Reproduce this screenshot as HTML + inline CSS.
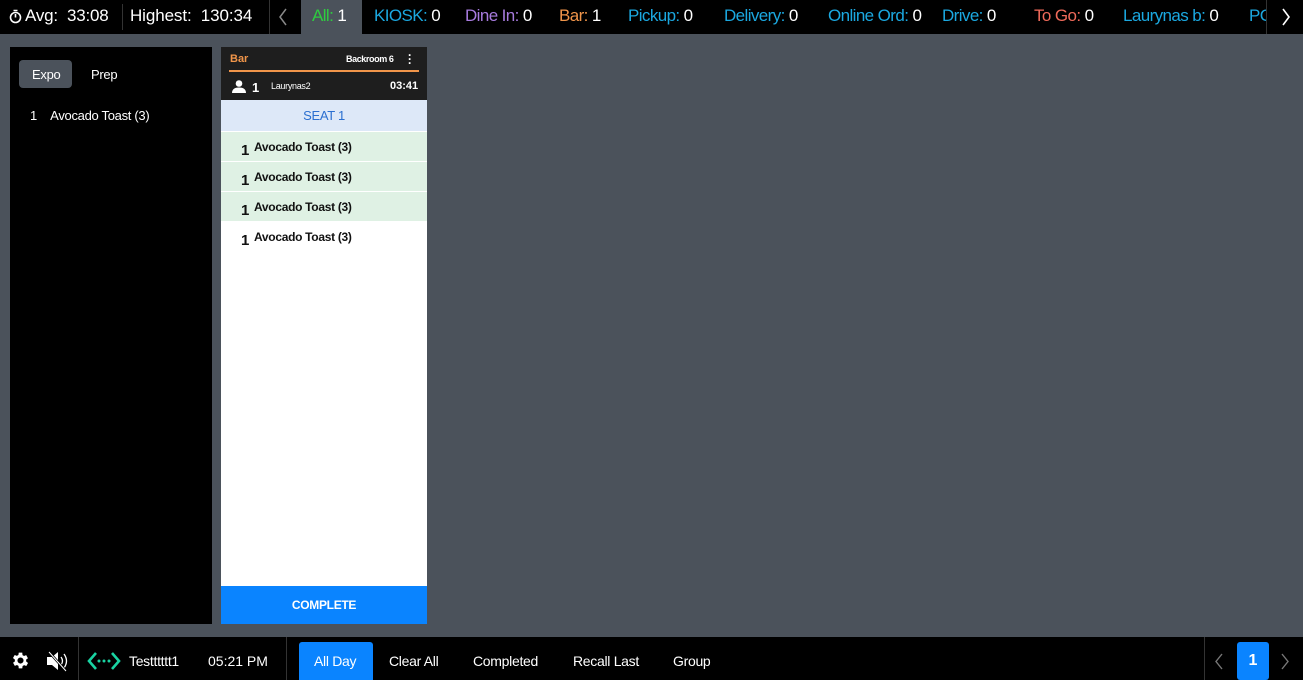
<!DOCTYPE html>
<html><head><style>
*{margin:0;padding:0;box-sizing:border-box}
body{width:1303px;height:680px;background:#4b525b;font-family:"Liberation Sans",sans-serif;position:relative;overflow:hidden;color:#fff}
.a{position:absolute;white-space:nowrap}
.top{left:0;top:0;width:1303px;height:34px;background:#000}
.t{top:6px;font-size:17px;letter-spacing:-0.6px}
.bot{left:0;top:637px;width:1303px;height:43px;background:#000}
.b{top:653px;font-size:14px;letter-spacing:-0.3px}
.row{position:absolute;left:221px;width:206px;height:29px;font-size:12px;font-weight:bold;color:#111;letter-spacing:-0.3px}
.row span.n{position:absolute;left:20px;top:10px;font-size:15px}
.row span.x{position:absolute;left:33px;top:8px}
</style></head><body>
<div class="a top"></div>
<svg class="a" style="left:9px;top:9px" width="13" height="15" viewBox="0 0 13 15"><circle cx="6.5" cy="8.5" r="5" fill="none" stroke="#fff" stroke-width="1.6"/><path d="M4.5 1.5h4M6.5 8.5V5" stroke="#fff" stroke-width="1.6"/></svg>
<div class="a t" style="left:25px;letter-spacing:-0.2px">Avg: &nbsp;33:08</div>
<div class="a" style="left:122px;top:4px;width:1px;height:26px;background:#333"></div>
<div class="a t" style="left:130px;letter-spacing:-0.1px">Highest: &nbsp;130:34</div>
<div class="a" style="left:269px;top:0;width:1px;height:34px;background:#333"></div>
<svg class="a" style="left:278px;top:8px" width="10" height="18" viewBox="0 0 10 18"><path d="M8 1L2 9l6 8" stroke="#888" stroke-width="1.5" fill="none"/></svg>
<div class="a" style="left:301px;top:0;width:61px;height:34px;background:#4b525b"></div>
<div class="a t" style="left:312px"><span style="color:#2ecc40">All:</span> 1</div>
<div class="a t" style="left:374px"><span style="color:#1ba8e0">KIOSK:</span> 0</div>
<div class="a t" style="left:465px"><span style="color:#a77bde">Dine In:</span> 0</div>
<div class="a t" style="left:559px"><span style="color:#f0954a">Bar:</span> 1</div>
<div class="a t" style="left:628px"><span style="color:#1ba8e0">Pickup:</span> 0</div>
<div class="a t" style="left:724px"><span style="color:#1ba8e0">Delivery:</span> 0</div>
<div class="a t" style="left:828px"><span style="color:#1ba8e0">Online Ord:</span> 0</div>
<div class="a t" style="left:942px"><span style="color:#1ba8e0">Drive:</span> 0</div>
<div class="a t" style="left:1034px"><span style="color:#f06a5a">To Go:</span> 0</div>
<div class="a t" style="left:1123px"><span style="color:#1ba8e0">Laurynas b:</span> 0</div>
<div class="a t" style="left:1249px;color:#1ba8e0">PC</div>
<div class="a" style="left:1266px;top:0;width:37px;height:34px;background:#000;border-left:1px solid #333"></div>
<svg class="a" style="left:1281px;top:8px" width="10" height="18" viewBox="0 0 10 18"><path d="M2 1l6 8-6 8" stroke="#fff" stroke-width="1.6" fill="none"/></svg>

<div class="a" style="left:10px;top:47px;width:202px;height:577px;background:#000"></div>
<div class="a" style="left:19px;top:60px;width:53px;height:28px;background:#4b525b;border-radius:4px"></div>
<div class="a" style="left:32px;top:67px;font-size:13px;letter-spacing:-0.3px">Expo</div>
<div class="a" style="left:91px;top:67px;font-size:13px;letter-spacing:-0.3px">Prep</div>
<div class="a" style="left:30px;top:108px;font-size:13px;letter-spacing:-0.3px">1 &nbsp;&nbsp;&nbsp;Avocado Toast (3)</div>

<div class="a" style="left:221px;top:47px;width:206px;height:53px;background:#1e1e1e"></div>
<div class="a" style="left:230px;top:53px;font-size:11px;font-weight:bold;color:#f0954a">Bar</div>
<div class="a" style="left:346px;top:54px;font-size:9px;font-weight:bold;letter-spacing:-0.4px">Backroom 6</div>
<div class="a" style="left:408px;top:53px;font-size:12px;font-weight:bold;line-height:4px">·<br>·<br>·</div>
<div class="a" style="left:229px;top:70px;width:190px;height:2px;background:#f0954a"></div>
<svg class="a" style="left:232px;top:80px" width="14" height="13" viewBox="0 0 14 13"><circle cx="7" cy="3.5" r="3.3" fill="#fff"/><path d="M0 13c0-4 3-5.5 7-5.5s7 1.5 7 5.5z" fill="#fff"/></svg>
<div class="a" style="left:252px;top:80px;font-size:13px;font-weight:bold">1</div>
<div class="a" style="left:271px;top:81px;font-size:9px;letter-spacing:-0.3px">Laurynas2</div>
<div class="a" style="left:390px;top:80px;font-size:11px;font-weight:bold">03:41</div>
<div class="a" style="left:221px;top:100px;width:206px;height:524px;background:#fff"></div>
<div class="a" style="left:221px;top:100px;width:206px;height:31px;background:#dde8f8;color:#2b6fd0;font-size:13px;text-align:center;line-height:31px;letter-spacing:-0.3px">SEAT 1</div>
<div class="row" style="top:132px;background:#dff1e4"><span class="n">1</span><span class="x">Avocado Toast (3)</span></div>
<div class="row" style="top:162px;background:#dff1e4"><span class="n">1</span><span class="x">Avocado Toast (3)</span></div>
<div class="row" style="top:192px;background:#dff1e4"><span class="n">1</span><span class="x">Avocado Toast (3)</span></div>
<div class="row" style="top:222px;background:#fff"><span class="n">1</span><span class="x">Avocado Toast (3)</span></div>
<div class="a" style="left:221px;top:586px;width:206px;height:38px;background:#0a84ff;text-align:center;line-height:38px;font-size:12px;font-weight:bold;letter-spacing:-0.3px">COMPLETE</div>

<div class="a bot"></div>
<svg class="a" style="left:10px;top:650px" width="21" height="21" viewBox="0 0 24 24"><path fill="#fff" d="M19.4 13a7.5 7.5 0 000-2l2.1-1.6-2-3.5-2.5 1a7.6 7.6 0 00-1.7-1L15 3h-4l-.4 2.7a7.6 7.6 0 00-1.7 1l-2.5-1-2 3.5L6.6 11a7.5 7.5 0 000 2l-2.1 1.6 2 3.5 2.5-1a7.6 7.6 0 001.7 1L11 21h4l.4-2.7a7.6 7.6 0 001.7-1l2.5 1 2-3.5zM13 15.5a3.5 3.5 0 110-7 3.5 3.5 0 010 7z" transform="translate(-1 0)"/></svg>
<svg class="a" style="left:45px;top:650px" width="26" height="22" viewBox="0 0 26 22"><path d="M2 7h5l6-5v18l-6-5H2z" fill="#fff"/><path d="M16 7q3 4 0 8M19 4q5 7 0 14" stroke="#fff" stroke-width="1.3" fill="none"/><path d="M4 2l17 19" stroke="#000" stroke-width="2.5"/><path d="M4 2l17 19" stroke="#fff" stroke-width="1"/></svg>
<div class="a" style="left:78px;top:637px;width:1px;height:43px;background:#333"></div>
<svg class="a" style="left:87px;top:651px" width="34" height="20" viewBox="0 0 34 20"><path d="M9 2L2 10l7 8M25 2l7 8-7 8" stroke="#19d3a2" stroke-width="2.6" fill="none"/><circle cx="12" cy="10" r="1.5" fill="#19d3a2"/><circle cx="17" cy="10" r="1.5" fill="#19d3a2"/><circle cx="22" cy="10" r="1.5" fill="#19d3a2"/></svg>
<div class="a b" style="left:129px">Testttttt1</div>
<div class="a b" style="left:208px;letter-spacing:0">05:21 PM</div>
<div class="a" style="left:286px;top:637px;width:1px;height:43px;background:#333"></div>
<div class="a" style="left:299px;top:642px;width:74px;height:38px;background:#0a84ff;border-radius:3px 3px 0 0"></div>
<div class="a b" style="left:314px">All Day</div>
<div class="a b" style="left:389px">Clear All</div>
<div class="a b" style="left:473px">Completed</div>
<div class="a b" style="left:573px">Recall Last</div>
<div class="a b" style="left:673px">Group</div>
<div class="a" style="left:1204px;top:637px;width:1px;height:43px;background:#333"></div>
<svg class="a" style="left:1214px;top:653px" width="10" height="17" viewBox="0 0 10 17"><path d="M8 1L2 8.5 8 16" stroke="#777" stroke-width="1.4" fill="none"/></svg>
<div class="a" style="left:1237px;top:642px;width:32px;height:38px;background:#0a84ff;border-radius:3px;text-align:center;line-height:38px;font-weight:bold;font-size:16px">1</div>
<svg class="a" style="left:1280px;top:653px" width="10" height="17" viewBox="0 0 10 17"><path d="M2 1l6 7.5L2 16" stroke="#777" stroke-width="1.4" fill="none"/></svg>
</body></html>
